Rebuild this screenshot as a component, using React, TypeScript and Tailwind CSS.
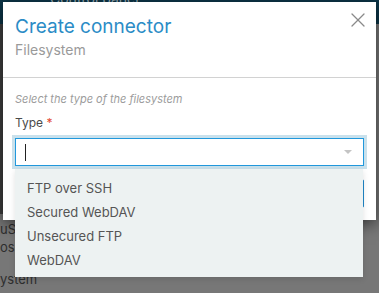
import { X } from 'lucide-react';

const fsTypes = ['FTP over SSH', 'Secured WebDAV', 'Unsecured FTP', 'WebDAV'];

function ConnectorModal() {
    return (
        <div className="absolute left-[3px] top-[2px] w-[373px] h-[218px] bg-white shadow-[0_4px_14px_rgba(0,0,0,0.55)]">
            <button type="button" className="absolute right-[6px] top-[6px] text-[#8a8a8a]">
                <X size={24} strokeWidth={1.3} />
            </button>

            <div className="px-[12px] pt-[13px] pb-[18px] border-b border-[#d2d2d2]">
                <h2 className="text-[19px] leading-[24px] text-[#2b8cc6]">Create connector</h2>
                <p className="mt-[2px] text-[14px] leading-[18px] text-[#9a9a9a]">Filesystem</p>
            </div>

            <div className="px-[12px] pt-[14px]">
                <p className="text-[11px] leading-[14px] italic text-[#9c9c9c]">
                    Select the type of the filesystem
                </p>
                <label className="mt-[9px] block text-[12px] leading-[16px] text-[#4a4a4a]">
                    Type <span className="text-[#e2472f]">*</span>
                </label>

                <div className="relative mt-[7px]">
                    <div className="flex h-[28px] items-center justify-between border border-[#2198dc] bg-white pl-[9px] pr-[11px] ring-[3px] ring-[#c9e1ec]">
                        <span className="h-[17px] w-px bg-[#222]" />
                        <span className="h-0 w-0 border-x-[4px] border-t-[4px] border-x-transparent border-t-[#c4c4c4]" />
                    </div>

                    <ul className="absolute left-0 top-[31px] z-10 w-[348px] bg-[#edf2f2] pt-[7px] pb-[5px] pl-[12px] shadow-[0_2px_6px_rgba(0,0,0,0.12)]">
                        {fsTypes.map((t) => (
                            <li key={t} className="text-[13px] leading-[24px] text-[#555]">
                                {t}
                            </li>
                        ))}
                    </ul>
                </div>

                <div className="mt-[13px] flex justify-end">
                    <button
                        type="button"
                        className="h-[29px] rounded-[2px] border border-[#1f86c8] bg-white px-4 text-[13px] text-[#1f86c8]"
                    >
                        Next
                    </button>
                </div>
            </div>
        </div>
    );
}

export default function App() {
    return (
        <div className="relative h-[293px] w-[379px] overflow-hidden bg-[#777] font-['Inter',sans-serif]">
            <div className="h-[30px] bg-[#0c3547] pl-[50px] text-[14px] leading-[10px] text-[#9fb0b8]">
                <span className="-mt-[6px] block">Control panel</span>
            </div>
            <div className="flex h-[190px] w-[40px] bg-[#3f3f3f]" />
            <div className="pt-[3px] text-[13px] text-[#2e2e2e]">
                <div className="h-[24px] leading-[24px]">uSi</div>
                <div className="-mt-[3px] h-[18px] leading-[18px]">osc</div>
                <div className="mt-[14px] h-[18px] leading-[18px]">ystem</div>
            </div>
            <ConnectorModal />
        </div>
    );
}
